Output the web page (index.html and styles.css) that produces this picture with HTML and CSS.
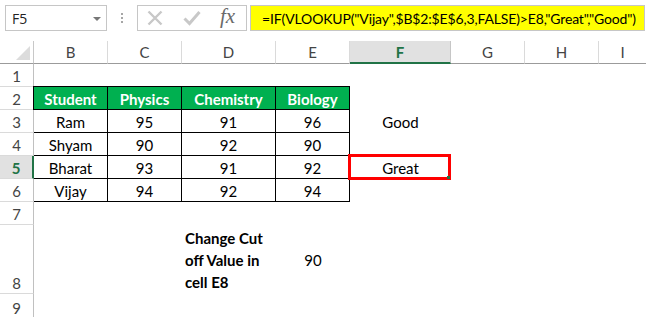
FILE: index.html
```html
<!DOCTYPE html>
<html>
<head>
<meta charset="utf-8">
<link rel="stylesheet" href="styles.css">
</head>
<body>
<div class="topbar">
  <div class="namebox"><span class="nb-text">F5</span><span class="nb-arrow"></span></div>
  <div class="dots"><i></i><i></i><i></i></div>
  <div class="fbuttons">
    <svg class="ic-x" width="16" height="16" viewBox="0 0 16 16"><path d="M1.5 1.5 L14.5 14.5 M14.5 1.5 L1.5 14.5" stroke="#c8c8c8" stroke-width="2.4" fill="none"/></svg>
    <svg class="ic-check" width="18" height="16" viewBox="0 0 18 16"><path d="M1.5 8.5 L6.5 13.5 L16.5 2" stroke="#c8c8c8" stroke-width="3" fill="none"/></svg>
    <span class="fx">fx</span>
  </div>
  <div class="formula">=IF(VLOOKUP("Vijay",$B$2:$E$6,3,FALSE)&gt;E8,"Great","Good")</div>
</div>

<div class="sheet">
  <div class="corner"><span class="tri"></span></div>
  <div class="ch">B</div>
  <div class="ch">C</div>
  <div class="ch">D</div>
  <div class="ch">E</div>
  <div class="ch ch-active">F</div>
  <div class="ch">G</div>
  <div class="ch">H</div>
  <div class="ch ch-last">I</div>

  <div class="rh">1</div>
  <div class="row-fill r1"></div>

  <div class="rh">2</div>
  <div class="table">
    <div class="th">Student</div><div class="th">Physics</div><div class="th">Chemistry</div><div class="th">Biology</div>
    <div class="td">Ram</div><div class="td">95</div><div class="td">91</div><div class="td">96</div>
    <div class="td">Shyam</div><div class="td">90</div><div class="td">92</div><div class="td">90</div>
    <div class="td">Bharat</div><div class="td">93</div><div class="td">91</div><div class="td">92</div>
    <div class="td">Vijay</div><div class="td">94</div><div class="td">92</div><div class="td">94</div>
  </div>
  <div class="cell r2 cf"></div>

  <div class="rh">3</div>
  <div class="cell r3 cf">Good</div>

  <div class="rh">4</div>
  <div class="cell r4 cf"></div>

  <div class="rh rh-active">5</div>
  <div class="cell r5 cf"><div class="selection"><span class="handle"></span></div>Great</div>

  <div class="rh">6</div>
  <div class="cell r6 cf"></div>

  <div class="rh">7</div>
  <div class="row-fill r7"></div>

  <div class="rh rh-tall">8</div>
  <div class="cell r8 cd note">Change Cut<br>off Value in<br>cell E8</div>
  <div class="cell r8 ce">90</div>

  <div class="rh rh-last">9</div>
</div>
</body>
</html>
```

FILE: styles.css
```css
* { box-sizing: border-box; margin: 0; padding: 0; }
html, body { background: #fff; width: 646px; height: 317px; overflow: hidden; }
body { font-family: "Lato", "Carlito", "Liberation Sans", sans-serif; font-size: 15px; color: #000; }

.topbar {
  height: 41px;
  display: flex;
  align-items: flex-start;
  padding: 5px 1px 0 5px;
}
.namebox {
  flex: 0 0 102px;
  height: 26px;
  border: 1px solid #c6c6c6;
  display: flex;
  align-items: center;
  justify-content: space-between;
  padding: 0 5px 0 6px;
  font-family: "Open Sans", "Noto Sans", sans-serif;
  font-size: 14px;
  color: #222;
}
.nb-arrow {
  width: 0; height: 0;
  border-left: 4px solid transparent;
  border-right: 4px solid transparent;
  border-top: 4px solid #777;
  margin-top: 1px;
}
.dots {
  flex: 0 0 30px;
  height: 26px;
  display: flex;
  flex-direction: column;
  align-items: center;
  justify-content: center;
  gap: 2px;
}
.dots i { display: block; width: 2px; height: 2px; background: #a6a6a6; }
.fbuttons {
  flex: 0 0 110px;
  height: 26px;
  border: 1px solid #c6c6c6;
  display: flex;
  align-items: center;
  padding-left: 9px;
}
.ic-x { margin-right: 20px; flex-shrink: 0; }
.ic-check { margin-right: 19px; flex-shrink: 0; }
.fx {
  font-family: "Liberation Serif", "DejaVu Serif", serif;
  font-style: italic;
  font-size: 21px;
  color: #6a6a6a;
  line-height: 1;
  margin-top: -3px;
}
.formula {
  margin-left: 3px;
  flex: 1 1 auto;
  min-width: 0;
  overflow: hidden;
  height: 26px;
  background: #ffff00;
  border: 1px solid #c6c6c6;
  padding-left: 11px;
  display: flex;
  align-items: center;
  font-size: 14px;
  letter-spacing: -0.15px;
  color: #000;
  white-space: nowrap;
}

.sheet {
  display: grid;
  grid-template-columns: 34px 74px 74px 94px 74px 101px 74px 74px 1fr;
  grid-template-rows: 23px 23px 23px 23px 23px 23px 23px 23px 69px 24px;
}
.corner {
  border-right: 1px solid #c8c8c8;
  border-bottom: 1px solid #9b9b9b;
  display: flex;
  justify-content: flex-end;
  align-items: flex-end;
  padding: 0 3px 3px 0;
}
.tri {
  width: 0; height: 0;
  border-left: 14px solid transparent;
  border-bottom: 14px solid #dcdcdc;
}
.ch {
  border-right: 1px solid #dadada;
  border-bottom: 1px solid #9b9b9b;
  display: flex;
  align-items: center;
  justify-content: center;
  color: #444;
  font-size: 15px;
}
.ch-last { border-right: 0; }
.ch-active {
  background: #e1e1e1;
  border-bottom: 2px solid #217346;
  color: #217346;
  font-weight: bold;
  border-right-color: #c6c6c6;
}
.rh {
  grid-column: 1;
  border-right: 1px solid #c0c0c0;
  border-bottom: 1px solid #dadada;
  display: flex;
  align-items: flex-end;
  justify-content: center;
  color: #444;
  padding-bottom: 1px;
  font-size: 15px;
}
.rh-active {
  background: #e1e1e1;
  border-right: 2px solid #217346;
  color: #217346;
  font-weight: bold;
}
.rh-last { border-bottom: 0; }
.r1 { grid-row: 2; grid-column: 2 / -1; }
.r7 { grid-row: 8; grid-column: 2 / -1; }

.table {
  grid-column: 2 / 6;
  grid-row: 3 / 8;
  margin: -1px 0 0 -1px;
  display: grid;
  grid-template-columns: 75px 74px 94px 74px;
  grid-template-rows: 24px 23px 23px 23px 23px;
}
.th, .td {
  display: flex;
  align-items: center;
  justify-content: center;
  border-right: 1px solid #000;
  border-bottom: 1px solid #000;
  padding-top: 1px;
}
.th:nth-child(4n+1), .td:nth-child(4n+1) { border-left: 1px solid #000; }
.th {
  background: #00b050;
  color: #fff;
  font-weight: bold;
  border-top: 1px solid #000;
}

.cell {
  display: flex;
  align-items: center;
  justify-content: center;
  padding-top: 1px;
}
.cf { grid-column: 6; }
.r2 { grid-row: 3; }
.r3 { grid-row: 4; }
.r4 { grid-row: 5; }
.r5 { grid-row: 6; position: relative; }
.r6 { grid-row: 7; }
.r8 { grid-row: 9; }
.cd { grid-column: 4; }
.ce { grid-column: 5; }
.note {
  justify-content: flex-start;
  padding-left: 3px;
  font-weight: bold;
  line-height: 22px;
}
.selection {
  position: absolute;
  left: -2px;
  top: -2px;
  right: 0;
  bottom: -1px;
  border: 3px solid #ff0000;
}
.handle {
  position: absolute;
  right: -2px;
  bottom: -2px;
  width: 3px;
  height: 3px;
  background: #217346;
}
```
